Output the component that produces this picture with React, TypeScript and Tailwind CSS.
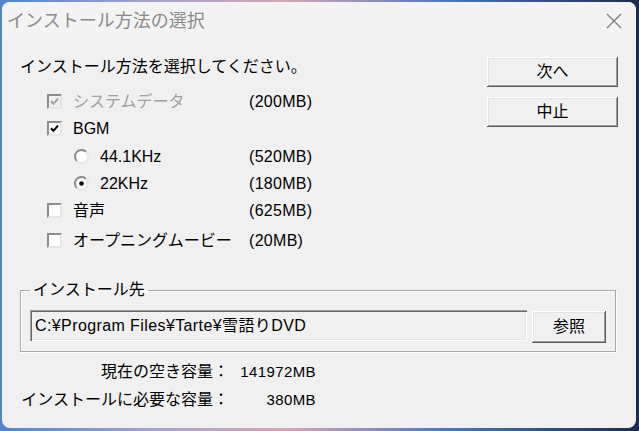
import type { ReactNode } from "react";

const font = "font-['Liberation_Sans','Noto_Sans_CJK_JP',sans-serif]";

function CheckBox({ checked, disabled }: { checked?: boolean; disabled?: boolean }) {
  return (
    <span
      className={`flex h-[15px] w-[15px] shrink-0 items-center justify-center border-2 border-t-[#8c8c8c] border-l-[#8c8c8c] border-r-[#e6e6e6] border-b-[#e6e6e6] ${
        disabled ? "bg-[#f0f0f0]" : "bg-white"
      }`}
    >
      {checked && (
        <svg width="9" height="9" viewBox="0 0 9 9" aria-hidden="true">
          <path
            d="M1 4.2 L3.4 6.8 L8 1.6"
            fill="none"
            stroke={disabled ? "#a0a0a0" : "#000"}
            strokeWidth="2"
          />
        </svg>
      )}
    </span>
  );
}

function Radio({ selected }: { selected?: boolean }) {
  return (
    <svg width="15" height="15" viewBox="0 0 15 15" className="shrink-0" aria-hidden="true">
      <circle cx="7.5" cy="7.5" r="6.5" fill="#fff" />
      <path d="M12.1 2.9 A6.5 6.5 0 0 0 2.9 12.1" fill="none" stroke="#8c8c8c" strokeWidth="2" />
      <path d="M2.9 12.1 A6.5 6.5 0 0 0 12.1 2.9" fill="none" stroke="#e6e6e6" strokeWidth="2" />
      {selected && <circle cx="7.5" cy="7.5" r="2.3" fill="#000" />}
    </svg>
  );
}

function Option({
  control,
  indent,
  label,
  size,
  disabled,
  className = "",
}: {
  control: ReactNode;
  indent: "box" | "radio";
  label: string;
  size?: string;
  disabled?: boolean;
  className?: string;
}) {
  return (
    <div className={`flex h-[27px] items-center ${className}`}>
      <div
        className={`flex w-[229px] items-center ${
          indent === "box" ? "gap-[11px] pl-[27px]" : "gap-[11px] pl-[54px]"
        }`}
      >
        {control}
        <span className={`whitespace-nowrap text-[16px] ${disabled ? "text-[#a0a0a0]" : "text-black"}`}>
          {label}
        </span>
      </div>
      {size && <span className="text-[16px] tracking-[0.3px] text-black">{size}</span>}
    </div>
  );
}

function PushButton({ children, className = "" }: { children: ReactNode; className?: string }) {
  return (
    <button
      className={`flex items-center justify-center bg-[#f0f0f0] text-[16px] text-black shadow-[inset_-1px_-1px_0_#5a5a5a,inset_1px_1px_0_#ffffff,inset_-2px_-2px_0_#a0a0a0,inset_2px_2px_0_#e3e3e3] ${className}`}
    >
      {children}
    </button>
  );
}

export default function App() {
  return (
    <div
      className={`h-[431px] w-[639px] overflow-hidden bg-[linear-gradient(90deg,#4f86c8_0%,#a9a4cc_25%,#d6a6b6_45%,#4a78b8_70%,#1d2c4c_100%)] pl-[2px] pt-[2px] ${font}`}
    >
      <div className="flex h-[426px] w-[634px] flex-col overflow-hidden rounded-[8px] bg-[#f0f0f0]">
        {/* title bar */}
        <div className="flex h-[38px] shrink-0 items-center justify-between bg-[#f3f3f3] pl-[5px] pr-[14px]">
          <span className="text-[18px] text-[#8a8a8a]">インストール方法の選択</span>
          <svg width="16" height="16" viewBox="0 0 16 16" aria-hidden="true">
            <path d="M1 1 L15 15 M15 1 L1 15" stroke="#7a7a7a" strokeWidth="1.2" />
          </svg>
        </div>

        <div className="flex flex-col px-[18px]">
          <div className="flex justify-between">
            <div className="flex flex-col">
              <div className="mt-[17px] h-[20px] whitespace-nowrap text-[16px] leading-[20px] text-black">
                インストール方法を選択してください。
              </div>
              <div className="mt-[11px] flex flex-col">
                <Option control={<CheckBox checked disabled />} indent="box" label="システムデータ" size="(200MB)" disabled />
                <Option control={<CheckBox checked />} indent="box" label="BGM" />
                <Option control={<Radio />} indent="radio" label="44.1KHz" size="(520MB)" className="mt-[1px]" />
                <Option control={<Radio selected />} indent="radio" label="22KHz" size="(180MB)" />
                <Option control={<CheckBox />} indent="box" label="音声" size="(625MB)" />
                <Option control={<CheckBox />} indent="box" label="オープニングムービー" size="(20MB)" className="mt-[3px]" />
              </div>
            </div>
            <div className="mt-[17px] flex w-[131px] flex-col gap-[10px]">
              <PushButton className="h-[30px]">次へ</PushButton>
              <PushButton className="h-[30px]">中止</PushButton>
            </div>
          </div>

          {/* install destination */}
          <fieldset className="mr-[2px] mt-[26px] border border-[#a8a8a8] px-[9px] pb-[8px] pt-[10px] shadow-[1px_1px_0_#ffffff,inset_1px_1px_0_#ffffff]">
            <legend className="h-[20px] px-[3px] text-[16px] leading-[20px] text-black">インストール先</legend>
            <div className="flex items-start gap-[5px]">
              <div className="flex h-[31px] flex-1 items-center whitespace-nowrap bg-[#f0f0f0] pl-[5px] text-[16px] tracking-[0.4px] text-black shadow-[inset_1px_1px_0_#a0a0a0,inset_2px_2px_0_#696969,inset_-1px_-1px_0_#ffffff,inset_-2px_-2px_0_#e3e3e3]">
                C:¥Program Files¥Tarte¥雪語りDVD
              </div>
              <PushButton className="mt-[1px] h-[32px] w-[74px]">参照</PushButton>
            </div>
          </fieldset>

          {/* disk space */}
          <div className="mt-[6px] grid grid-cols-[209px_87px] whitespace-nowrap text-[16px] text-black">
            <span className="flex h-[28px] items-center justify-end">現在の空き容量：</span>
            <span className="flex h-[28px] items-center justify-end text-[15px] tracking-[0.4px]">141972MB</span>
            <span className="flex h-[28px] items-center justify-end">インストールに必要な容量：</span>
            <span className="flex h-[28px] items-center justify-end text-[15px] tracking-[0.4px]">380MB</span>
          </div>
        </div>
      </div>
    </div>
  );
}
